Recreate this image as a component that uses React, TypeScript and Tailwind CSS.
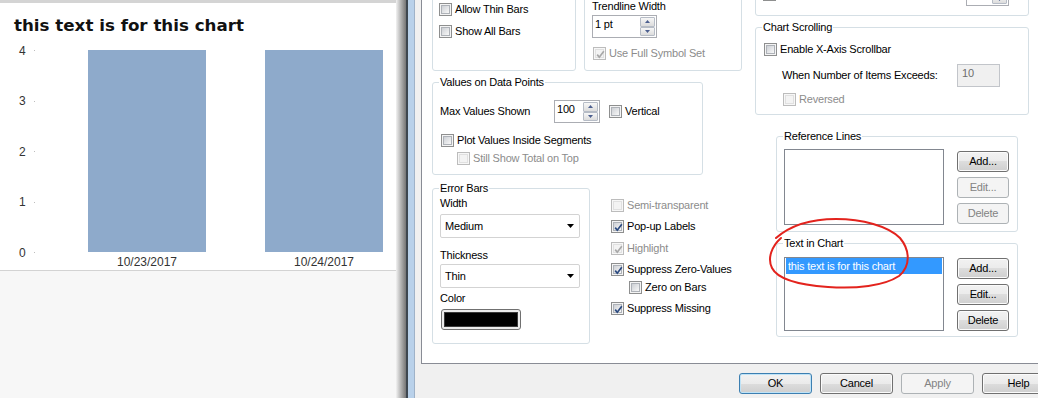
import React from "react";

type Ck = { checked?: boolean; disabled?: boolean };

const Check = ({ checked = false, disabled = false }: Ck) => (
  <span
    className={`relative flex h-[13px] w-[13px] shrink-0 border p-[1px] ${
      disabled ? "border-[#bcbcbc] bg-[#f7f7f7]" : "border-[#8e8f8f] bg-[#f4f4f4]"
    }`}
  >
    <span
      className={`h-full w-full border ${
        disabled
          ? "border-[#e0e0e0] bg-[#f3f3f3]"
          : "border-[#aeb2b8] bg-gradient-to-br from-[#cdd0d5] to-[#f8f8f8]"
      }`}
    />
    {checked && (
      <svg className="absolute left-[1px] top-[1px]" width="11" height="11" viewBox="0 0 11 11">
        <path
          d="M2.2 5.6 L4.3 8.2 L8.8 2.2"
          fill="none"
          stroke={disabled ? "#a8a8a8" : "#2b4a80"}
          strokeWidth="1.7"
        />
      </svg>
    )}
  </span>
);

const CheckRow = ({
  label,
  checked,
  disabled,
  className = "",
}: Ck & { label: string; className?: string }) => (
  <div className={`flex h-[13px] items-center gap-[3px] ${className}`}>
    <Check checked={checked} disabled={disabled} />
    <span className={`whitespace-nowrap leading-[13px] ${disabled ? "text-[#8c8c8c]" : "text-black"}`}>
      {label}
    </span>
  </div>
);

const Group = ({
  title,
  className = "",
  children,
}: {
  title?: string;
  className?: string;
  children?: React.ReactNode;
}) => (
  <div className={`relative shrink-0 rounded-[3px] border border-[#d5dfe5] ${className}`}>
    {title && (
      <span className="absolute -top-[7px] left-[6px] whitespace-nowrap bg-white px-[1px] leading-[13px]">
        {title}
      </span>
    )}
    {children}
  </div>
);

const Arrow = ({ up }: { up?: boolean }) => (
  <svg width="5" height="3" viewBox="0 0 5 3">
    <polygon points={up ? "0,3 2.5,0 5,3" : "0,0 5,0 2.5,3"} fill="#4c5f8f" />
  </svg>
);

const Spin = ({ value, className = "" }: { value: string; className?: string }) => (
  <div className={`flex h-[23px] shrink-0 border border-[#abadb3] bg-white ${className}`}>
    <span className="flex-1 pl-[2px] pt-[2px] leading-[13px]">{value}</span>
    <div className="my-[1px] mr-[1px] flex w-[15px] flex-col">
      <span className="flex flex-1 items-center justify-center rounded-[1px] border border-[#b6bcc6] bg-gradient-to-b from-[#f7f7f7] to-[#dcdcdc]">
        <Arrow up />
      </span>
      <span className="flex flex-1 items-center justify-center rounded-[1px] border border-[#b6bcc6] bg-gradient-to-b from-[#f7f7f7] to-[#dcdcdc]">
        <Arrow />
      </span>
    </div>
  </div>
);

const Drop = ({ value, className = "" }: { value: string; className?: string }) => (
  <div
    className={`flex h-[24px] w-[140px] items-center justify-between rounded-[2px] border border-[#d3d3d3] bg-white pl-[4px] pr-[5px] ${className}`}
  >
    <span className="leading-[13px]">{value}</span>
    <svg width="7" height="4" viewBox="0 0 7 4">
      <polygon points="0,0 7,0 3.5,4" fill="#000" />
    </svg>
  </div>
);

const Btn = ({
  label,
  disabled,
  primary,
  className = "",
}: {
  label: string;
  disabled?: boolean;
  primary?: boolean;
  className?: string;
}) => (
  <div
    className={`flex shrink-0 items-center justify-center rounded-[3px] border leading-[13px] ${
      disabled
        ? "border-[#adb2b5] bg-[#f4f4f4] text-[#838383]"
        : primary
        ? "border-[#3c7fb1] bg-[linear-gradient(#f2f2f2,#ebebeb_50%,#dddddd_50%,#cfcfcf)] shadow-[inset_0_0_0_1px_#bfe3f7]"
        : "border-[#707070] bg-[linear-gradient(#f2f2f2,#ebebeb_50%,#dddddd_50%,#cfcfcf)] shadow-[inset_0_0_0_1px_#fbfbfb]"
    } ${className}`}
  >
    {label}
  </div>
);

const ChartPane = () => (
  <div className="flex w-[396px] shrink-0 flex-col bg-[#f7f7f7]">
    <div className="h-[3px] bg-[#d4d4d4]" />
    <div className="h-[268px] border-b border-[#d3d3d3] bg-white pt-[12px]">
      <div className="pl-[14px] font-['DejaVu_Sans',Verdana,sans-serif] text-[16.7px] font-bold leading-[20px] tracking-normal text-[#111]">
        this text is for this chart
      </div>
      <div className="mt-[15px] flex items-start text-[12px] tracking-normal text-[#333]">
        <div className="flex h-[203px] w-[36px] flex-col justify-between">
          {["4", "3", "2", "1", "0"].map((n) => (
            <div key={n} className="flex h-px items-center">
              <span className="w-[30px] pl-[19px] leading-[14px]">{n}</span>
              <span className="ml-[4px] h-px w-px bg-[#bdbdbd]" />
            </div>
          ))}
        </div>
        {["10/23/2017", "10/24/2017"].map((d, i) => (
          <div key={d} className={`flex w-[118px] flex-col ${i === 0 ? "ml-[52px]" : "ml-[59px]"}`}>
            <div className="h-[202px] bg-[#8eaacb]" />
            <div className="mt-[3px] text-center leading-[14px]">{d}</div>
          </div>
        ))}
      </div>
    </div>
  </div>
);

const ColumnA = () => (
  <div className="ml-[10px] flex w-[310px] shrink-0 flex-col">
    <div className="-mt-[10px] flex h-[81px] shrink-0 gap-[8px]">
      <Group className="h-full w-[144px] pl-[6px] pt-[12px]">
        <CheckRow label="Allow Thin Bars" />
        <CheckRow label="Show All Bars" className="mt-[9px]" />
      </Group>
      <Group className="h-full w-[158px] pl-[7px] pt-[9px]">
        <div className="leading-[13px]">Trendline Width</div>
        <Spin value="1 pt" className="mt-[2px] w-[65px]" />
        <CheckRow label="Use Full Symbol Set" checked disabled className="ml-[1px] mt-[9px]" />
      </Group>
    </div>

    <Group title="Values on Data Points" className="mt-[11px] h-[93px] w-[271px] pl-[7px] pt-[17px]">
      <div className="flex h-[23px] items-center">
        <span className="w-[114px] leading-[13px]">Max Values Shown</span>
        <Spin value="100" className="w-[46px]" />
        <CheckRow label="Vertical" className="ml-[9px]" />
      </div>
      <CheckRow label="Plot Values Inside Segments" className="ml-[1px] mt-[11px]" />
      <CheckRow label="Still Show Total on Top" disabled className="ml-[17px] mt-[5px]" />
    </Group>

    <div className="mt-[13px] flex">
      <Group title="Error Bars" className="h-[156px] w-[158px] pl-[7px] pt-[8px]">
        <div className="leading-[13px]">Width</div>
        <Drop value="Medium" className="mt-[4px]" />
        <div className="mt-[11px] leading-[13px]">Thickness</div>
        <Drop value="Thin" className="mt-[2px]" />
        <div className="mt-[4px] leading-[13px]">Color</div>
        <div className="ml-[1px] mt-[4px] flex h-[21px] w-[80px] rounded-[3px] border border-[#707070] bg-[#ececec] p-[2px]">
          <div className="h-full w-full border border-[#3a3a3a] bg-black" />
        </div>
      </Group>
      <div className="ml-[21px] flex flex-col pt-[11px]">
        <CheckRow label="Semi-transparent" disabled />
        <CheckRow label="Pop-up Labels" checked className="mt-[8px]" />
        <CheckRow label="Highlight" checked disabled className="mt-[9px]" />
        <CheckRow label="Suppress Zero-Values" checked className="mt-[8px]" />
        <CheckRow label="Zero on Bars" className="ml-[18px] mt-[5px]" />
        <CheckRow label="Suppress Missing" checked className="mt-[8px]" />
      </div>
    </div>
  </div>
);

const ListGroup = ({
  title,
  className,
  listH,
  selected,
  editable,
}: {
  title: string;
  className: string;
  listH: string;
  selected?: string;
  editable?: boolean;
}) => (
  <Group title={title} className={`ml-[21px] flex w-[242px] pl-[7px] ${className}`}>
    <div className={`w-[160px] shrink-0 border border-[#828790] bg-white ${listH}`}>
      {selected && (
        <div className="mx-px h-[16px] bg-[#3399ff] pl-[2px] leading-[16px] text-white">{selected}</div>
      )}
    </div>
    <div className={`ml-[13px] flex flex-col gap-[5px] ${editable ? "pt-[1px]" : "pt-[2px]"}`}>
      <Btn label="Add..." className="h-[21px] w-[52px]" />
      <Btn label="Edit..." disabled={!editable} className="h-[21px] w-[52px]" />
      <Btn label="Delete" disabled={!editable} className="h-[21px] w-[52px]" />
    </div>
  </Group>
);

const ColumnB = () => (
  <div className="ml-[13px] flex w-[274px] shrink-0 flex-col">
    <Group className="-mt-[26px] h-[42px] pl-[7px] pr-[19px] pt-[8px]">
      <div className="flex h-[23px] items-center justify-between">
        <CheckRow label="Limit Legend (characters)" />
        <Spin value="" className="w-[43px]" />
      </div>
    </Group>

    <Group title="Chart Scrolling" className="mt-[11px] h-[88px] pl-[8px] pt-[15px]">
      <CheckRow label="Enable X-Axis Scrollbar" />
      <div className="mt-[8px] flex h-[23px] items-center">
        <span className="ml-[18px] w-[175px] leading-[13px]">When Number of Items Exceeds:</span>
        <div className="h-[23px] w-[43px] border border-[#c2c5ca] bg-[#f0f0f0] pl-[4px] pt-[2px] leading-[13px] text-[#6d6d6d]">
          10
        </div>
      </div>
      <CheckRow label="Reversed" disabled className="ml-[19px] mt-[6px]" />
    </Group>

    <ListGroup title="Reference Lines" className="mt-[21px] h-[96px] pt-[12px]" listH="h-[76px]" />
    <ListGroup
      title="Text in Chart"
      className="mt-[11px] h-[94px] pt-[13px]"
      listH="h-[74px]"
      selected="this text is for this chart"
      editable
    />
  </div>
);

const Dialog = () => (
  <div className="flex min-w-0 flex-1 flex-col bg-[#f0f0f0]">
    <div className="ml-[6px] flex h-[364px] shrink-0 border-b border-l border-[#898c95] bg-white">
      <ColumnA />
      <ColumnB />
    </div>
    <div className="ml-[324px] mt-[9px] flex gap-[8px]">
      <Btn label="OK" primary className="h-[21px] w-[73px]" />
      <Btn label="Cancel" className="h-[21px] w-[73px]" />
      <Btn label="Apply" disabled className="h-[21px] w-[73px]" />
      <Btn label="Help" className="h-[21px] w-[73px]" />
    </div>
  </div>
);

export default function App() {
  return (
    <div className="relative flex h-[398px] w-[1038px] overflow-hidden font-['Liberation_Sans',Arial,sans-serif] text-[11px] tracking-[-0.2px] text-black">
      <ChartPane />
      <div className="w-[10px] shrink-0 bg-gradient-to-r from-[#f2f2f2] to-[#767676]" />
      <div className="w-[2px] shrink-0 bg-[#3e4750]" />
      <div className="w-[6px] shrink-0 bg-[#b9d1ea]" />
      <div className="w-px shrink-0 bg-[#9fb2c8]" />
      <Dialog />
      {/* hand-drawn highlight round the chart text entry */}
      <svg className="pointer-events-none absolute left-0 top-0" width="1038" height="398">
        <path
          d="M781 238 C 772 246, 767 258, 772 268 C 778 280, 800 285, 828 287 C 856 289, 884 286, 899 276 C 911 266, 910 250, 900 238 C 888 226, 862 219, 836 219 C 812 219, 792 224, 776 238"
          fill="none"
          stroke="#e3231d"
          strokeWidth="2"
          strokeLinecap="round"
        />
      </svg>
    </div>
  );
}
